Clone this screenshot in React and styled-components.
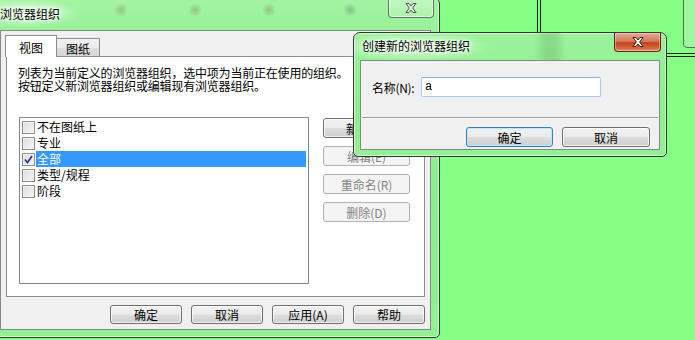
import React from 'react';
import styled, { createGlobalStyle, css } from 'styled-components';

const GlobalStyle = createGlobalStyle`
  html, body {
    margin: 0;
    padding: 0;
    overflow: hidden;
  }
  body {
    font-family: "Noto Sans CJK SC", "Liberation Sans", sans-serif;
    font-size: 12px;
    color: #000;
  }
  * {
    box-sizing: border-box;
  }
`;

const Desktop = styled.div`
  position: relative;
  width: 695px;
  height: 340px;
  background: #86ff86;
  overflow: hidden;
`;

// decorations drawn on the desktop canvas behind the windows
const VLine = styled.div`
  position: absolute;
  left: ${p => p.$x}px;
  top: ${p => p.$y}px;
  width: 4px;
  height: ${p => p.$h}px;
  border-left: 1px solid #222;
  border-right: 1px solid #222;
`;

const HLine = styled.div`
  position: absolute;
  left: ${p => p.$x}px;
  top: ${p => p.$y}px;
  width: ${p => p.$w}px;
  height: 4px;
  border-top: 1px solid #222;
  border-bottom: 1px solid #222;
`;

const Tile = styled.div`
  position: absolute;
  left: 683px;
  top: -8px;
  width: 30px;
  height: 56px;
  border: 1px solid #4a7a4a;
  border-radius: 4px;
  background: #9ef79e;
`;

const Window = styled.div`
  position: absolute;
  left: ${p => p.$x}px;
  top: ${p => p.$y}px;
  width: ${p => p.$w}px;
  height: ${p => p.$h}px;
  display: flex;
  flex-direction: column;
  border: 1px solid #2e3a2e;
  border-radius: 7px 7px 5px 5px;
  background: linear-gradient(to bottom, #9cf29c, #8cee8c 60%, #94f094);
  box-shadow: inset 0 0 0 1px rgba(255, 255, 255, 0.55);
  overflow: hidden;
`;

const TitleBar = styled.div`
  position: relative;
  display: flex;
  align-items: flex-start;
  height: ${p => p.$h}px;
  padding-left: ${p => p.$pad}px;
  padding-top: ${p => p.$top}px;
  flex-shrink: 0;
  background: ${p => p.$glow};
`;

const Title = styled.div`
  font-size: 12px;
  line-height: 16px;
  color: #000;
  text-shadow: 0 0 6px #fff, 0 0 10px #fff, 0 0 3px #fff;
`;

const CloseButton = styled.div`
  position: absolute;
  top: 0;
  right: 5px;
  width: ${p => p.$w}px;
  height: ${p => p.$h}px;
  display: flex;
  align-items: center;
  justify-content: center;
  border-radius: 0 0 4px 4px;
  ${p => p.$active ? css`
    border: 1px solid #5a2a1a;
    border-top: none;
    background: linear-gradient(to bottom, #e8a890 0%, #d47a5e 45%, #c0431c 55%, #d86a3e 85%, #e89a78 100%);
    box-shadow: inset 0 0 0 1px rgba(255, 255, 255, 0.35);
  ` : css`
    border: 1px solid #5f7a5f;
    border-top: none;
    background: linear-gradient(to bottom, rgba(255,255,255,0.35), rgba(255,255,255,0.15));
    box-shadow: inset 0 0 0 1px rgba(255, 255, 255, 0.5);
  `}
`;

const Client = styled.div`
  flex: 1;
  display: flex;
  flex-direction: column;
  margin: 0 ${p => p.$r}px ${p => p.$b}px ${p => p.$l}px;
  background: #f0f0f0;
  border: 1px solid #7f8f7f;
`;

const MainClient = styled(Client)`
  padding: 4px 5px 0 5px;
`;

const TabStrip = styled.div`
  display: flex;
  align-items: flex-end;
  height: 21px;
  margin-left: -1px;
`;

const Tab = styled.div`
  position: relative;
  display: flex;
  justify-content: center;
  font-size: 12px;
  line-height: 14px;
  border: 1px solid #898c95;
  border-bottom: none;
  ${p => p.$selected ? css`
    height: 22px;
    padding: 5px 13px 0;
    margin-bottom: -1px;
    background: #fff;
    z-index: 1;
  ` : css`
    height: 18px;
    padding: 3px 9px 0;
    border-left: none;
    background: linear-gradient(to bottom, #f3f3f3, #ebebeb 50%, #dedede 50%, #d6d6d6);
  `}
`;

const TabPanel = styled.div`
  display: flex;
  flex-direction: column;
  width: 419px;
  height: 241px;
  padding: 9px 12px 0 12px;
  border: 1px solid #898c95;
  background: #fff;
`;

const Description = styled.div`
  font-size: 12px;
  line-height: 13px;
  margin-left: -1px;
  white-space: nowrap;
  letter-spacing: -0.2px;
`;

const PanelBody = styled.div`
  display: flex;
  margin-top: 25px;
`;

const ListBox = styled.div`
  width: 290px;
  height: 167px;
  padding: 1px 2px 0 2px;
  border: 1px solid #828790;
  background: #fff;
`;

const ListRow = styled.div`
  display: flex;
  align-items: center;
  height: 16px;
`;

const CheckBox = styled.span`
  display: flex;
  align-items: center;
  justify-content: center;
  width: 13px;
  height: 13px;
  flex-shrink: 0;
  border: 1px solid #8f8f8f;
  background: linear-gradient(135deg, #dcdcdc, #f6f6f6);
  box-shadow: inset 0 0 0 1px #f4f4f4;
  margin-right: 1px;
`;

const RowLabel = styled.span`
  flex: 1;
  height: 16px;
  line-height: 16px;
  padding-left: 1px;
  font-size: 12px;
  ${p => p.$selected && css`
    background: #3399ff;
    color: #fff;
  `}
`;

const SideButtons = styled.div`
  display: flex;
  flex-direction: column;
  gap: 8px;
  margin-left: 14px;
  padding-top: 1px;
`;

const Button = styled.div`
  display: flex;
  align-items: center;
  justify-content: center;
  width: ${p => p.$w || 87}px;
  height: ${p => p.$h || 20}px;
  font-size: 12px;
  border-radius: 3px;
  border: 1px solid #707070;
  background: linear-gradient(to bottom, #f2f2f2 0%, #ebebeb 48%, #dddddd 52%, #cfcfcf 100%);
  box-shadow: inset 0 0 0 1px rgba(255, 255, 255, 0.7);
  white-space: nowrap;
  ${p => p.$disabled && css`
    border-color: #adb2b5;
    background: #f4f4f4;
    color: #838383;
    box-shadow: none;
  `}
  ${p => p.$default && css`
    border-color: #3c7fb1;
    box-shadow: inset 0 0 0 1px #b7e9fd;
  `}
`;

const BottomBar = styled.div`
  display: flex;
  justify-content: flex-end;
  gap: 9px;
  margin-top: 8px;
  padding-right: 0;
  width: 419px;
`;

const DialogClient = styled(Client)`
  padding: 16px 0 0 0;
`;

const FieldRow = styled.div`
  display: flex;
  align-items: center;
  padding-left: 11px;
  height: 20px;
`;

const FieldLabel = styled.label`
  width: 49px;
  font-size: 12px;
  white-space: nowrap;
  letter-spacing: -0.3px;
`;

const TextInput = styled.div`
  width: 180px;
  height: 20px;
  padding-left: 3px;
  font-family: "Liberation Mono", monospace;
  font-size: 12px;
  line-height: 18px;
  border: 1px solid #a9cbee;
  border-top-color: #7eb4ea;
  border-radius: 2px;
  background: #fff;
`;

const Separator = styled.div`
  margin: 20px 1px 0;
  height: 2px;
  border-top: 1px solid #a0a0a0;
  border-bottom: 1px solid #fff;
`;

const DialogButtons = styled.div`
  display: flex;
  justify-content: flex-end;
  gap: 9px;
  margin-top: 8px;
  padding-right: 9px;
`;

const CloseGlyph = ({ active }) => (
  <svg width="14" height="12" viewBox="0 0 14 12">
    <path
      d="M2 1.5 L5 1.5 L7 4 L9 1.5 L12 1.5 L8.6 6 L12 10.5 L9 10.5 L7 8 L5 10.5 L2 10.5 L5.4 6 Z"
      fill={active ? '#fff' : '#e8ece8'}
      stroke={active ? '#3a1a10' : '#4a5a4a'}
      strokeWidth="1"
      strokeLinejoin="round"
    />
  </svg>
);

const CheckMark = () => (
  <svg width="9" height="9" viewBox="0 0 9 9">
    <path d="M1 4.5 L3.5 7.5 L8 1" fill="none" stroke="#2a3f8f" strokeWidth="1.8" />
  </svg>
);

const items = [
  { label: '不在图纸上', checked: false },
  { label: '专业', checked: false },
  { label: '全部', checked: true, selected: true },
  { label: '类型/规程', checked: false },
  { label: '阶段', checked: false },
];

const mainGlow = `
  radial-gradient(ellipse 60px 14px at 30px 15px, rgba(255,255,255,0.75), rgba(255,255,255,0) 100%),
  radial-gradient(circle 7px at 128px 12px, rgba(120,110,60,0.35), rgba(120,110,60,0)),
  radial-gradient(circle 7px at 202px 12px, rgba(120,110,60,0.35), rgba(120,110,60,0)),
  radial-gradient(circle 7px at 276px 12px, rgba(120,110,60,0.35), rgba(120,110,60,0)),
  radial-gradient(circle 7px at 357px 12px, rgba(80,90,80,0.35), rgba(80,90,80,0)),
  linear-gradient(to bottom, rgba(255,255,255,0.08), rgba(255,255,255,0))
`;

const dialogGlow = `
  radial-gradient(ellipse 80px 14px at 60px 14px, rgba(255,255,255,0.7), rgba(255,255,255,0) 100%),
  linear-gradient(to right, rgba(0,0,0,0) 180px, rgba(60,110,60,0.18) 192px, rgba(60,110,60,0.18) 200px, rgba(0,0,0,0) 212px)
`;

const App = () => {
  return (
    <>
      <GlobalStyle />
      <Desktop>
        <VLine $x={537} $y={0} $h={32} />
        <HLine $x={666} $y={53} $w={40} />
        <Tile />

        <Window $x={-8} $y={-3} $w={448} $h={341}>
          <TitleBar $h={32} $pad={7} $top={8} $glow={mainGlow}>
            <Title>浏览器组织</Title>
            <CloseButton $w={46} $h={20}>
              <CloseGlyph />
            </CloseButton>
          </TitleBar>
          <MainClient $l={7} $r={8} $b={7}>
            <TabStrip>
              <Tab $selected>视图</Tab>
              <Tab>图纸</Tab>
            </TabStrip>
            <TabPanel>
              <Description>
                列表为当前定义的浏览器组织，选中项为当前正在使用的组织。<br />
                按钮定义新浏览器组织或编辑现有浏览器组织。
              </Description>
              <PanelBody>
                <ListBox>
                  {items.map(item => (
                    <ListRow key={item.label}>
                      <CheckBox>{item.checked && <CheckMark />}</CheckBox>
                      <RowLabel $selected={item.selected}>{item.label}</RowLabel>
                    </ListRow>
                  ))}
                </ListBox>
                <SideButtons>
                  <Button>新建(N)</Button>
                  <Button $disabled>编辑(E)</Button>
                  <Button $disabled>重命名(R)</Button>
                  <Button $disabled>删除(D)</Button>
                </SideButtons>
              </PanelBody>
            </TabPanel>
            <BottomBar>
              <Button $w={72} $h={19}>确定</Button>
              <Button $w={72} $h={19}>取消</Button>
              <Button $w={72} $h={19}>应用(A)</Button>
              <Button $w={72} $h={19}>帮助</Button>
            </BottomBar>
          </MainClient>
        </Window>

        <Window $x={353} $y={32} $w={314} $h={125}>
          <TitleBar $h={27} $pad={8} $top={5} $glow={dialogGlow}>
            <Title>创建新的浏览器组织</Title>
            <CloseButton $active $w={47} $h={19}>
              <CloseGlyph active />
            </CloseButton>
          </TitleBar>
          <DialogClient $l={6} $r={6} $b={6}>
            <FieldRow>
              <FieldLabel>名称(N):</FieldLabel>
              <TextInput>a</TextInput>
            </FieldRow>
            <Separator />
            <DialogButtons>
              <Button $default>确定</Button>
              <Button $w={88}>取消</Button>
            </DialogButtons>
          </DialogClient>
        </Window>
      </Desktop>
    </>
  );
};

export default App;
